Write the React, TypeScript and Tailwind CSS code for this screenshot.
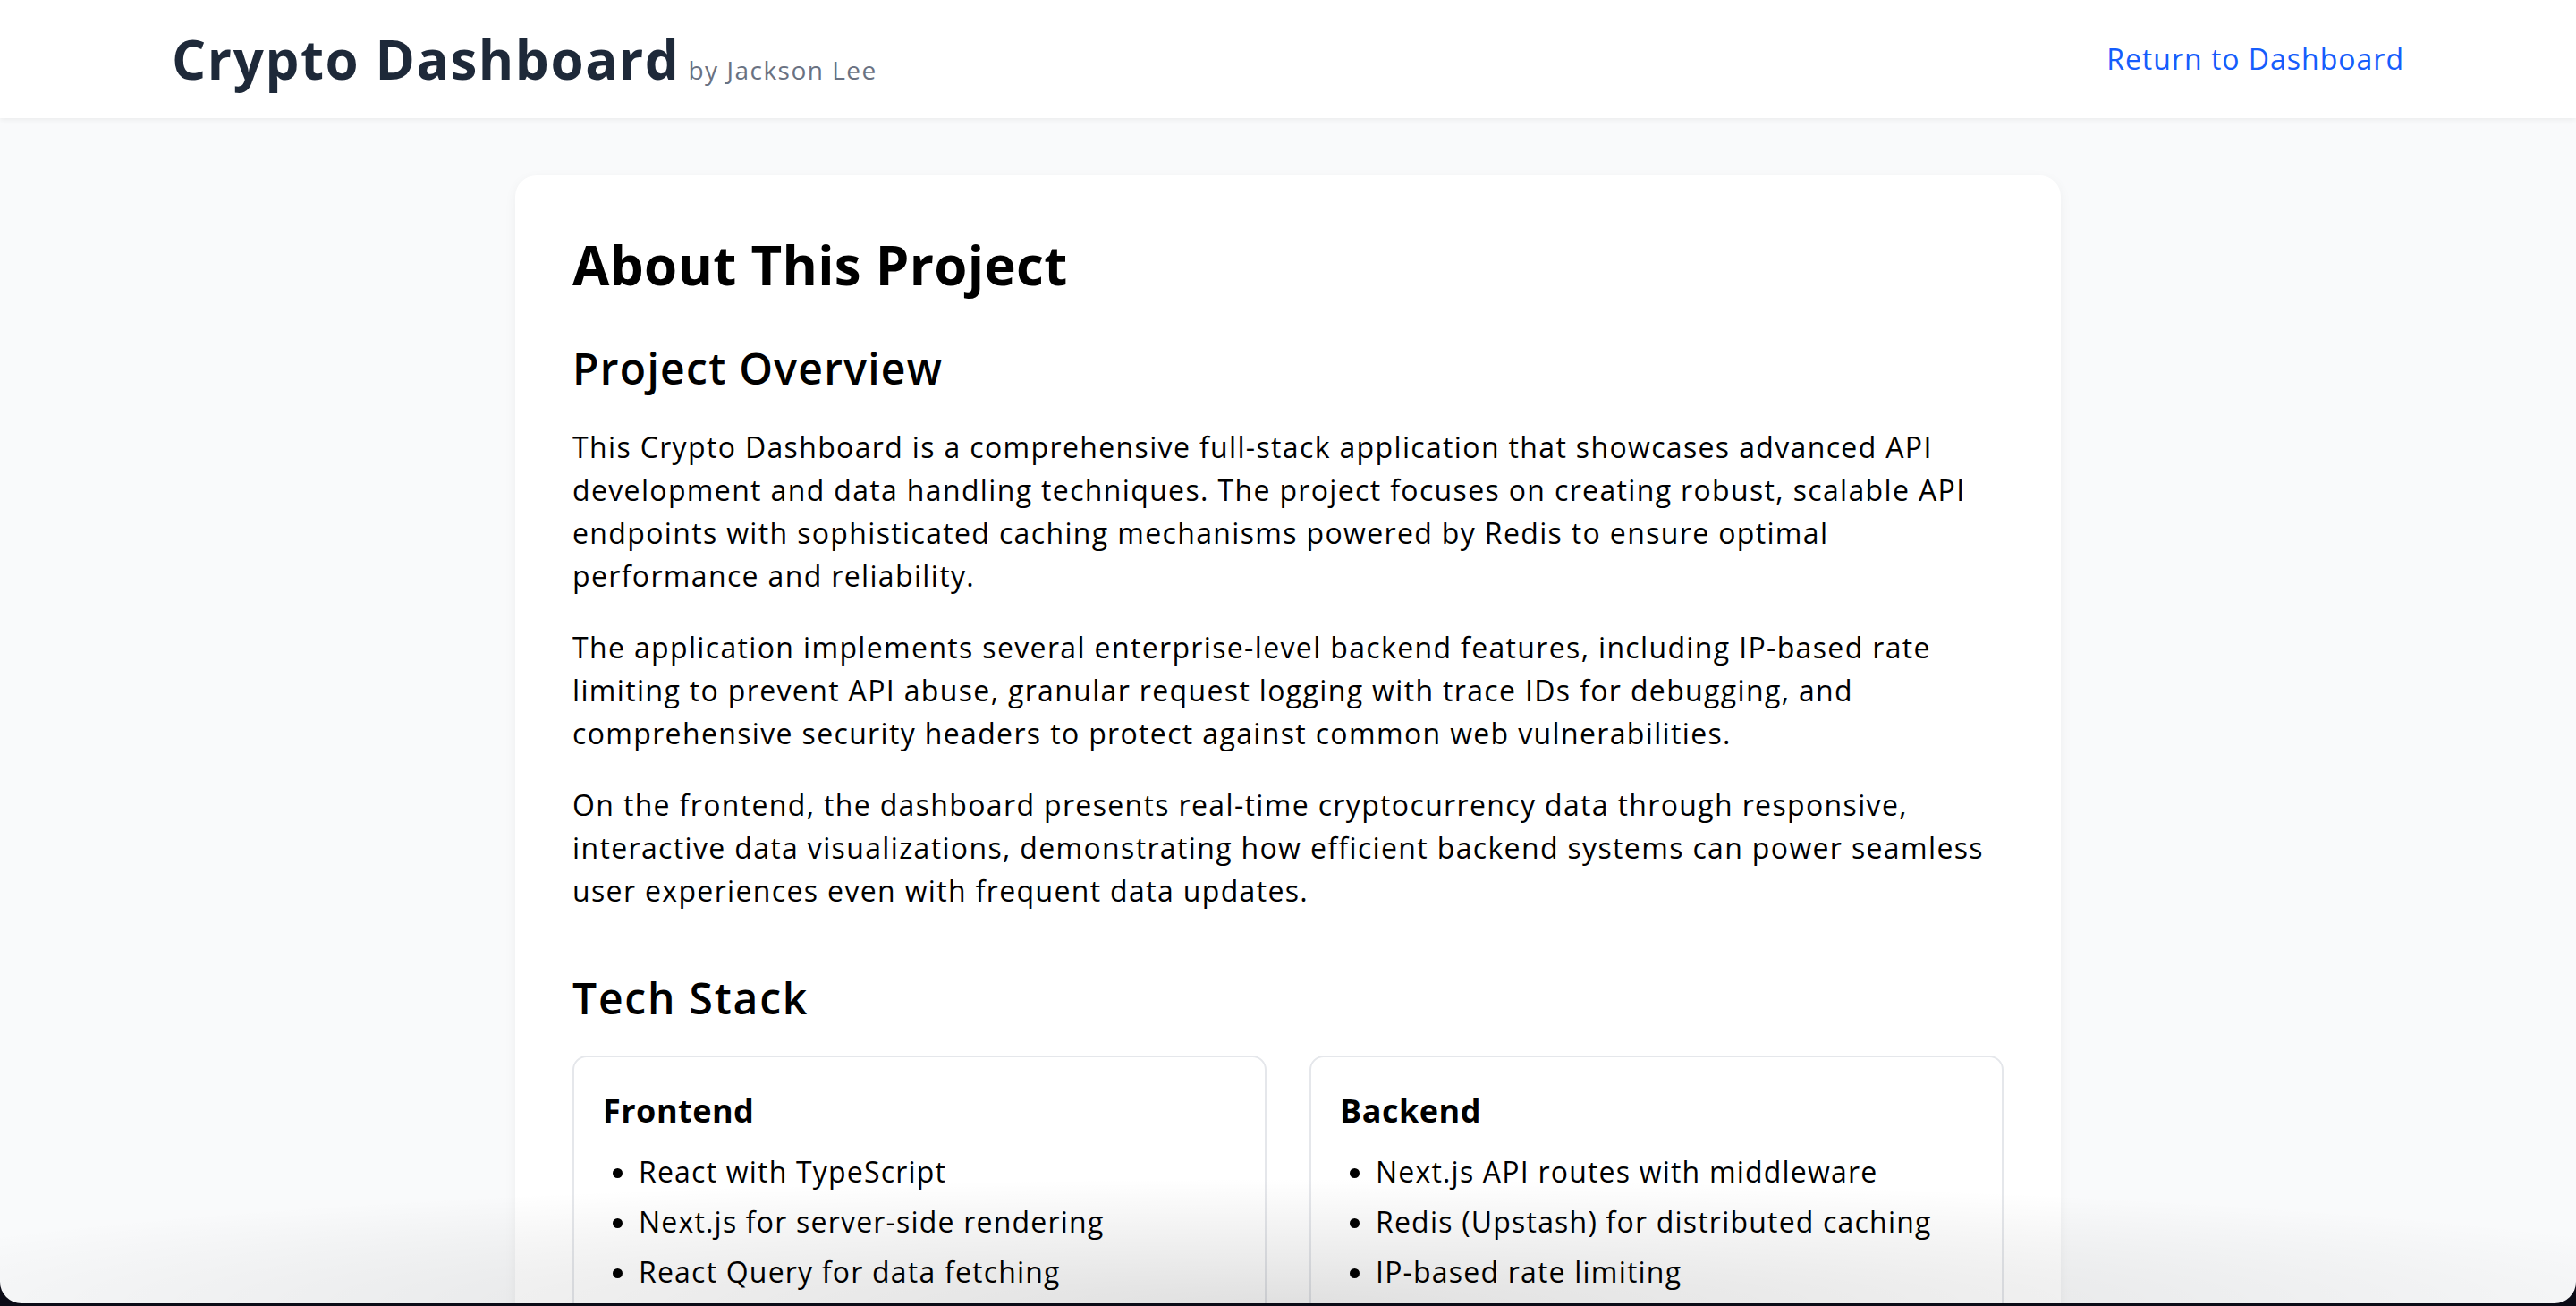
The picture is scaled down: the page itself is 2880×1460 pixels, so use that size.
import React from "react";

const frontend = [
  "React with TypeScript",
  "Next.js for server-side rendering",
  "React Query for data fetching",
];

const backend = [
  "Next.js API routes with middleware",
  "Redis (Upstash) for distributed caching",
  "IP-based rate limiting",
];

const StackCard = ({ title, items }: { title: string; items: string[] }) => (
  <div className="rounded-2xl border-2 border-gray-200 p-8">
    <h3 className="mb-4 text-[36px] leading-[56px] font-bold tracking-[0.5px]">{title}</h3>
    <ul className="list-disc space-y-2 pl-10 text-[32px] leading-[48px] tracking-[1.2px]">
      {items.map((item) => (
        <li key={item}>{item}</li>
      ))}
    </ul>
  </div>
);

export default function App() {
  return (
    <div className="h-[1460px] overflow-hidden bg-[#0b0b16] font-['Open_Sans',sans-serif] text-black">
      <div className="relative h-[1457px] overflow-hidden rounded-b-[24px] bg-gray-50">
        <header className="bg-white shadow-[0_2px_6px_rgba(0,0,0,0.06)]">
          <div className="mx-auto flex max-w-[2560px] items-center justify-between px-8 py-[30px]">
            <div className="flex items-baseline gap-[9px]">
              <h1 className="text-[60px] leading-[72px] font-bold tracking-[1.6px] text-gray-800">
                Crypto Dashboard
              </h1>
              <span className="text-[28px] tracking-[1.5px] text-gray-500">by Jackson Lee</span>
            </div>
            <a href="#" className="text-[32px] leading-[48px] tracking-[1px] text-blue-600">
              Return to Dashboard
            </a>
          </div>
        </header>

        <main className="mx-auto max-w-[1792px] px-8 py-16">
          <div className="rounded-3xl bg-white p-16 shadow-[0_4px_14px_rgba(0,0,0,0.05)]">
            <h1 className="mb-12 text-[60px] leading-[72px] font-bold tracking-[0.3px]">About This Project</h1>

            <section className="mb-16">
              <h2 className="mb-8 text-[48px] leading-[64px] font-semibold tracking-[1.3px]">Project Overview</h2>
              <div className="space-y-8 text-[32px] leading-[48px] tracking-[1.35px]">
                <p>
                  This Crypto Dashboard is a comprehensive full-stack application that showcases advanced API
                  <br />
                  development and data handling techniques. The project focuses on creating robust, scalable API
                  <br />
                  endpoints with sophisticated caching mechanisms powered by Redis to ensure optimal
                  <br />
                  performance and reliability.
                </p>
                <p>
                  The application implements several enterprise-level backend features, including IP-based rate
                  <br />
                  limiting to prevent API abuse, granular request logging with trace IDs for debugging, and
                  <br />
                  comprehensive security headers to protect against common web vulnerabilities.
                </p>
                <p>
                  On the frontend, the dashboard presents real-time cryptocurrency data through responsive,
                  <br />
                  interactive data visualizations, demonstrating how efficient backend systems can power seamless
                  <br />
                  user experiences even with frequent data updates.
                </p>
              </div>
            </section>

            <section>
              <h2 className="mb-8 text-[48px] leading-[64px] font-semibold tracking-[1.8px]">Tech Stack</h2>
              <div className="grid grid-cols-2 gap-12">
                <StackCard title="Frontend" items={frontend} />
                <StackCard title="Backend" items={backend} />
              </div>
            </section>
          </div>
        </main>

        <div className="pointer-events-none absolute inset-x-0 bottom-0 h-[140px] bg-[radial-gradient(ellipse_60%_100%_at_50%_100%,rgba(0,0,0,0.12),transparent)]" />
      </div>
    </div>
  );
}
